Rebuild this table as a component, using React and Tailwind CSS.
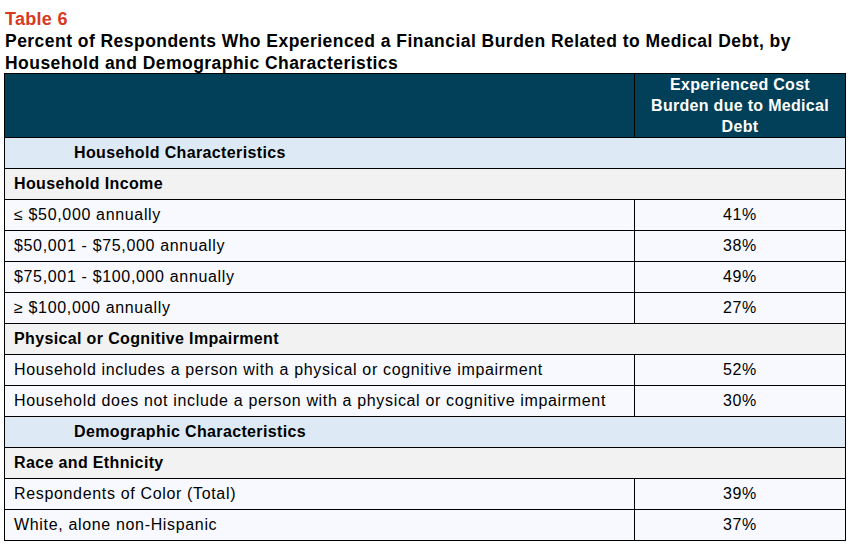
import React from 'react';

const rows = [
  { type: 'section', label: 'Household Characteristics' },
  { type: 'group', label: 'Household Income' },
  { label: '≤ $50,000 annually', value: '41%' },
  { label: '$50,001 - $75,000 annually', value: '38%' },
  { label: '$75,001 - $100,000 annually', value: '49%' },
  { label: '≥ $100,000 annually', value: '27%' },
  { type: 'group', label: 'Physical or Cognitive Impairment' },
  { label: 'Household includes a person with a physical or cognitive impairment', value: '52%' },
  { label: 'Household does not include a person with a physical or cognitive impairment', value: '30%' },
  { type: 'section', label: 'Demographic Characteristics' },
  { type: 'group', label: 'Race and Ethnicity' },
  { label: 'Respondents of Color (Total)', value: '39%' },
  { label: 'White, alone non-Hispanic', value: '37%' },
];

export default function App() {
  return (
    <div className="bg-white w-[854px] h-[548px] pl-[4px] pt-[8px] text-black font-['Liberation_Sans',Arial,sans-serif]">
      <div className="pl-[1px] text-[18px] leading-[22px] font-bold tracking-[0.3px] text-[#d63a1f]">Table 6</div>
      <div className="pl-[1px] text-[17.5px] leading-[22px] font-bold tracking-[0.46px]">
        Percent of Respondents Who Experienced a Financial Burden Related to Medical Debt, by
        <br />
        Household and Demographic Characteristics
      </div>
      <table className="mt-[-1px] w-[842px] border-collapse border border-black text-[16px]">
        <colgroup>
          <col className="w-[630px]" />
          <col />
        </colgroup>
        <thead>
          <tr className="bg-[#023f58] h-[63px]">
            <th className="border border-black"></th>
            <th className="border border-black text-white font-bold leading-[21px] tracking-[0.3px] px-3 text-center">
              Experienced Cost Burden due to Medical Debt
            </th>
          </tr>
        </thead>
        <tbody>
          {rows.map((r, i) => {
            if (r.type === 'section') {
              return (
                <tr key={i} className="bg-[#dde9f5] h-[31px]">
                  <td colSpan={2} className="border border-black pl-[69px] font-bold tracking-[0.36px]">{r.label}</td>
                </tr>
              );
            }
            if (r.type === 'group') {
              return (
                <tr key={i} className="bg-[#f2f2f2] h-[31px]">
                  <td colSpan={2} className="border border-black pl-[9px] font-bold tracking-[0.36px]">{r.label}</td>
                </tr>
              );
            }
            return (
              <tr key={i} className="bg-[#f7f9fe] h-[31px]">
                <td className="border border-black pl-[9px] tracking-[0.66px]">{r.label}</td>
                <td className="border border-black text-center tracking-[0.66px]">{r.value}</td>
              </tr>
            );
          })}
        </tbody>
      </table>
    </div>
  );
}
